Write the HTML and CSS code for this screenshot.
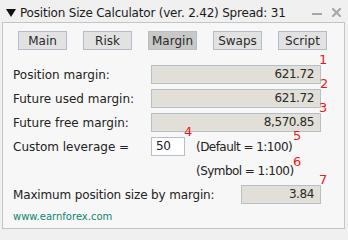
FILE: index.html
```html
<!DOCTYPE html>
<html>
<head>
<meta charset="utf-8">
<link rel="stylesheet" href="styles.css">
</head>
<body>
<div class="window">
  <div class="titlebar">
    <svg class="tri" width="10" height="8" viewBox="0 0 10 8"><path d="M0 0 L10 0 L5 8 Z" fill="#111"/></svg>
    <span class="title">Position Size Calculator (ver. 2.42) Spread: 31</span>
    <span class="spacer"></span>
    <span class="minbtn"></span>
    <svg class="closebtn" width="9" height="9" viewBox="0 0 9 9"><path d="M1 1 L8 8 M8 1 L1 8" stroke="#a8a8a8" stroke-width="2.2" stroke-linecap="square"/></svg>
  </div>
  <div class="panel">
    <div class="tabs">
      <span class="tab">Main</span>
      <span class="tab">Risk</span>
      <span class="tab active">Margin</span>
      <span class="tab">Swaps</span>
      <span class="tab">Script</span>
    </div>
    <div class="rows">
      <div class="row">
        <span class="label">Position margin:</span>
        <span class="field wide">621.72</span>
      </div>
      <div class="row">
        <span class="label">Future used margin:</span>
        <span class="field wide">621.72</span>
      </div>
      <div class="row">
        <span class="label">Future free margin:</span>
        <span class="field wide">8,570.85</span>
      </div>
      <div class="row">
        <span class="label">Custom leverage =</span>
        <span class="input">50</span>
        <span class="note">(Default = 1:100)</span>
      </div>
      <div class="row">
        <span class="label"></span>
        <span class="inputgap"></span>
        <span class="note">(Symbol = 1:100)</span>
      </div>
      <div class="row">
        <span class="label longlabel">Maximum position size by margin:</span>
        <span class="field short">3.84</span>
      </div>
    </div>
    <div class="footer">www.earnforex.com</div>
    <span class="num n1">1</span>
    <span class="num n2">2</span>
    <span class="num n3">3</span>
    <span class="num n4">4</span>
    <span class="num n5">5</span>
    <span class="num n6">6</span>
    <span class="num n7">7</span>
  </div>
</div>
</body>
</html>
```
FILE: styles.css
```css
html, body {
  margin: 0;
  padding: 0;
  background: #f0f0f0;
}
body {
  font-family: "DejaVu Sans", sans-serif;
  font-size: 12px;
  color: #222;
  width: 348px;
  height: 232px;
  overflow: hidden;
}
.titlebar {
  height: 22px;
  box-sizing: border-box;
  padding: 4px 0 0 6px;
  line-height: 18px;
  display: flex;
  align-items: flex-start;
}
.tri {
  margin-top: 5px;
  margin-right: 4px;
  flex: none;
}
.title {
  color: #1a1a1a;
  letter-spacing: -0.2px;
  white-space: nowrap;
}
.spacer { flex: 1; }
.minbtn {
  width: 10px;
  height: 2px;
  background: #a8a8a8;
  margin-top: 9px;
  margin-right: 10px;
}
.closebtn {
  margin-top: 4px;
  margin-right: 7px;
}
.panel {
  position: relative;
  margin-left: 2px;
  width: 343px;
  height: 207px;
  box-sizing: border-box;
  border: 1px solid #c4c4c4;
  background: #f7f7f7;
  padding: 8px 0 0 15px;
}
.tabs {
  display: flex;
  gap: 16px;
}
.tab {
  width: 49px;
  height: 19px;
  box-sizing: border-box;
  border: 1px solid #b3bdc8;
  background: #e2e2e2;
  display: flex;
  align-items: center;
  justify-content: center;
  color: #2a2a2a;
}
.tab.active {
  background: #c8c8c8;
  border-color: #b6bec6;
}
.rows {
  margin-top: 15px;
  margin-left: -5px;
  display: flex;
  flex-direction: column;
  gap: 5px;
}
.row {
  height: 19px;
  display: flex;
  align-items: center;
}
.label {
  width: 138px;
  flex: none;
  white-space: nowrap;
}
.longlabel {
  width: 228px;
  letter-spacing: -0.15px;
}
.field {
  height: 19px;
  box-sizing: border-box;
  border: 1px solid #b7bfc6;
  background: #e1dfd7;
  text-align: right;
  padding-right: 6px;
  line-height: 17px;
  letter-spacing: -0.4px;
  color: #2a2a2a;
}
.field.wide { width: 170px; }
.field.short { width: 80px; }
.input {
  width: 34px;
  height: 19px;
  box-sizing: border-box;
  border: 1px solid #b7bfc6;
  background: #ffffff;
  padding-left: 4px;
  line-height: 17px;
  letter-spacing: -0.3px;
}
.inputgap {
  width: 34px;
  flex: none;
}
.note {
  margin-left: 11px;
  letter-spacing: -0.55px;
  white-space: nowrap;
}
.footer {
  margin-top: 7px;
  margin-left: -5px;
  font-size: 10px;
  line-height: 12px;
  color: #0e8572;
}
.num {
  position: absolute;
  font-size: 13px;
  line-height: 13px;
  color: #f01818;
}
.n1 { left: 316px; top: 30px; }
.n2 { left: 317px; top: 54px; }
.n3 { left: 316px; top: 78px; }
.n4 { left: 181px; top: 102px; }
.n5 { left: 290px; top: 106px; }
.n6 { left: 290px; top: 132px; }
.n7 { left: 316px; top: 150px; }
```
